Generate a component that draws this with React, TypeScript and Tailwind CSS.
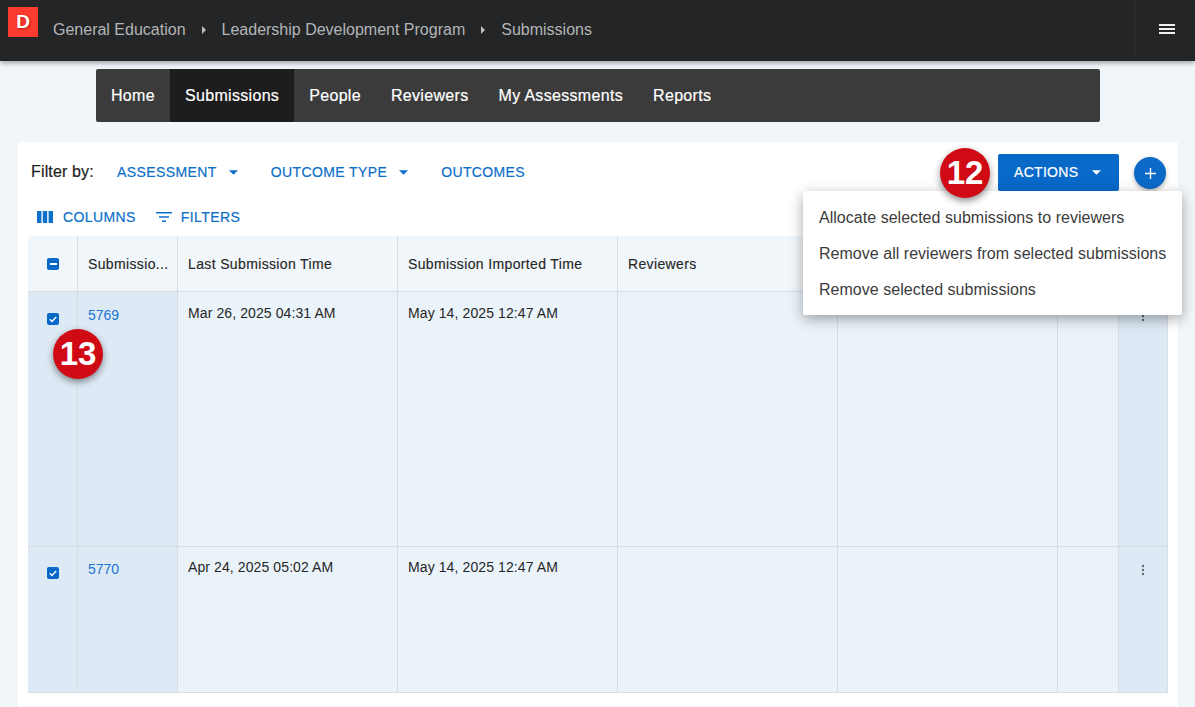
const font = { fontFamily: '"Liberation Sans", Arial, sans-serif' };

const navItems = ["Home", "Submissions", "People", "Reviewers", "My Assessments", "Reports"];

const columns = [
  "w-[50px]",
  "w-[100px]",
  "w-[220px]",
  "w-[220px]",
  "w-[220px]",
  "w-[220px]",
  "w-[61px]",
  "w-[48px]",
];

const rows = [
  { id: "5769", last: "Mar 26, 2025 04:31 AM", imported: "May 14, 2025 12:47 AM", height: "h-[255px] border-b border-[#d9dde0]", pad: "pt-[13px]" },
  { id: "5770", last: "Apr 24, 2025 05:02 AM", imported: "May 14, 2025 12:47 AM", height: "h-[145px]", pad: "pt-[12px]" },
];

function Caret({ className }: { className: string }) {
  return (
    <svg viewBox="0 0 10 5" className={className} fill="currentColor">
      <path d="M0 0h10L5 5z" />
    </svg>
  );
}

function Crumb() {
  return (
    <svg viewBox="0 0 4 8" className="mx-[16px] h-[8px] w-[4px] text-[#bdbdbd]" fill="currentColor">
      <path d="M0 0l4 4-4 4z" />
    </svg>
  );
}

function Checkbox() {
  return (
    <span className="flex h-[12px] w-[12px] items-center justify-center rounded-[2px] bg-[#0868c8]">
      <svg viewBox="0 0 12 12" className="h-[12px] w-[12px]" fill="none" stroke="white" strokeWidth="1.4">
        <path d="M2.8 6.2l2.2 2.2 4.2-4.4" />
      </svg>
    </span>
  );
}

function Badge({ label, className }: { label: string; className: string }) {
  return (
    <div
      className={`absolute z-20 flex h-[50px] w-[50px] items-center justify-center rounded-full bg-[#d00a14] text-[33px] font-bold text-white shadow-[0_3px_7px_rgba(0,0,0,0.45)] ${className}`}
    >
      {label}
    </div>
  );
}

function Dots() {
  return (
    <svg viewBox="0 0 4 12" className="h-[12px] w-[4px] text-[#5f6b73]" fill="currentColor">
      <circle cx="2" cy="2" r="1.2" />
      <circle cx="2" cy="6" r="1.2" />
      <circle cx="2" cy="10" r="1.2" />
    </svg>
  );
}

export default function App() {
  return (
    <div style={font} className="relative h-[707px] w-[1195px] overflow-hidden bg-[#f1f6fa]">
      {/* top bar */}
      <header className="relative z-10 flex h-[61px] items-start bg-[#232527] shadow-[0_2px_5px_rgba(0,0,0,0.35)]">
        <div className="ml-[8px] mt-[7px] flex h-[30px] w-[30px] items-start justify-center bg-[#fb3a30] pt-[5px] text-[19px] font-bold leading-[20px] text-white [text-shadow:1px_1px_2px_rgba(120,0,0,0.5)]">
          D
        </div>
        <nav className="ml-[15px] mt-[21px] flex items-center text-[16px] leading-[18px] text-[#b4b5b6]">
          <span>General Education</span>
          <Crumb />
          <span>Leadership Development Program</span>
          <Crumb />
          <span>Submissions</span>
        </nav>
        <div className="ml-auto flex h-[59px] w-[61px] items-center justify-center border-l border-[#2f3133] pl-[4px]">
          <div className="flex w-[16px] flex-col gap-[2px] pb-[1px]">
            <span className="h-[2px] bg-[#f0f0f0]" />
            <span className="h-[2px] bg-[#f0f0f0]" />
            <span className="h-[2px] bg-[#f0f0f0]" />
          </div>
        </div>
      </header>

      {/* section nav */}
      <div className="ml-[96px] mt-[8px] flex h-[53px] w-[1004px] overflow-hidden rounded-[2px] bg-[#3b3b3b]">
        {navItems.map((item) => (
          <div
            key={item}
            className={`flex items-center px-[15px] text-[16px] tracking-[0.32px] text-white [-webkit-text-stroke:0.2px] ${item === "Submissions" ? "bg-[#1d1d1d]" : ""}`}
          >
            {item}
          </div>
        ))}
      </div>

      {/* main card */}
      <main className="ml-[18px] mt-[20px] h-[565px] w-[1160px] bg-white px-[10px]">
        <div className="flex h-[50px] items-center pl-[3px] pt-[10px]">
          <span className="w-[86px] text-[16px] tracking-[0.15px] text-[#222] [-webkit-text-stroke:0.2px]">Filter by:</span>
          <button className="flex items-center text-[14px] tracking-[0.4px] text-[#0c6fc9] [-webkit-text-stroke:0.2px]">
            ASSESSMENT
            <Caret className="ml-[12px] h-[5px] w-[9px]" />
          </button>
          <button className="ml-[33px] flex items-center text-[14px] tracking-[0.4px] text-[#0c6fc9] [-webkit-text-stroke:0.2px]">
            OUTCOME TYPE
            <Caret className="ml-[12px] h-[5px] w-[9px]" />
          </button>
          <button className="ml-[33px] text-[14px] tracking-[0.35px] text-[#0c6fc9] [-webkit-text-stroke:0.2px]">OUTCOMES</button>
        </div>

        <div className="flex h-[44px] items-center pl-[9px] pt-[6px] text-[14px] tracking-[0.4px] text-[#0c6fc9] [-webkit-text-stroke:0.2px]">
          <svg viewBox="0 0 16 12" className="mr-[10px] h-[12px] w-[16px]" fill="currentColor">
            <path d="M0 0h4.4v12H0zM5.8 0h4.4v12H5.8zM11.6 0H16v12h-4.4z" />
          </svg>
          COLUMNS
          <svg viewBox="0 0 16 10" className="ml-[20px] mr-[9px] h-[10px] w-[16px]" fill="currentColor">
            <path d="M0 0h16v1.6H0zM3 4.2h10v1.6H3zM6 8.4h4V10H6z" />
          </svg>
          FILTERS
        </div>

        {/* table */}
        <div className="w-[1140px] border-b border-r border-[#d9dde0] text-[14px]">
          <div className="flex h-[56px] border-b border-[#d9dde0] bg-[#f1f6fa] text-[#262626]">
            {columns.map((width, i) => (
              <div
                key={width + i}
                className={`flex shrink-0 items-center border-r border-[#d9dde0] pl-[10px] pt-[1px] tracking-[0.36px] [-webkit-text-stroke:0.15px] ${width} last:border-r-0`}
              >
                {i === 0 && (
                  <span className="ml-[9px] flex h-[12px] w-[12px] items-center justify-center rounded-[2px] bg-[#0868c8]">
                    <span className="h-[2px] w-[7px] bg-white" />
                  </span>
                )}
                {i === 1 && "Submissio..."}
                {i === 2 && "Last Submission Time"}
                {i === 3 && "Submission Imported Time"}
                {i === 4 && "Reviewers"}
              </div>
            ))}
          </div>
          {rows.map((row) => (
            <div key={row.id} className={`flex ${row.height} bg-[#ebf3fa] text-[#262626]`}>
              {columns.map((width, i) => (
                <div
                  key={width + i}
                  className={`shrink-0 border-r border-[#d9dde0] pl-[10px] ${row.pad} leading-[16px] tracking-[0.1px] ${width} last:border-r-0 ${i < 2 || i === 7 ? "bg-[#dde9f5]" : ""}`}
                >
                  {i === 0 && (
                    <div className="ml-[9px] mt-[8px]">
                      <Checkbox />
                    </div>
                  )}
                  {i === 1 && <div className="mt-[2px] tracking-normal text-[#1976d2]">{row.id}</div>}
                  {i === 2 && row.last}
                  {i === 3 && row.imported}
                  {i === 7 && (
                    <div className="ml-[12px] mt-[5px]">
                      <Dots />
                    </div>
                  )}
                </div>
              ))}
            </div>
          ))}
        </div>
      </main>

      {/* actions */}
      <button className="absolute left-[998px] top-[154px] z-10 flex h-[37px] w-[121px] items-center rounded-[2px] bg-[#0869c9] pl-[16px] text-[14px] tracking-[0.3px] text-white [-webkit-text-stroke:0.2px]">
        ACTIONS
        <Caret className="ml-[14px] h-[5px] w-[9px]" />
      </button>
      <button className="absolute left-[1134px] top-[157px] z-10 flex h-[32px] w-[32px] items-center justify-center rounded-full bg-[#0b69c7] shadow-[0_2px_4px_rgba(0,0,0,0.3)]">
        <svg viewBox="0 0 12 12" className="h-[11px] w-[11px]" fill="none" stroke="white" strokeWidth="1.5">
          <path d="M6 0v12M0 6h12" />
        </svg>
      </button>

      {/* dropdown menu */}
      <div className="absolute left-[803px] top-[191px] z-10 flex h-[124px] w-[379px] flex-col justify-center rounded-[2px] bg-white pt-[2px] text-[16px] tracking-[0.03px] text-[#3c3c3c] shadow-[0_4px_14px_rgba(0,0,0,0.35)]">
        <div className="flex h-[36px] items-center pl-[16px]">Allocate selected submissions to reviewers</div>
        <div className="flex h-[36px] items-center pl-[16px]">Remove all reviewers from selected submissions</div>
        <div className="flex h-[36px] items-center pl-[16px]">Remove selected submissions</div>
      </div>

      <Badge label="12" className="left-[940px] top-[148px]" />
      <Badge label="13" className="left-[53px] top-[329px]" />
    </div>
  );
}
